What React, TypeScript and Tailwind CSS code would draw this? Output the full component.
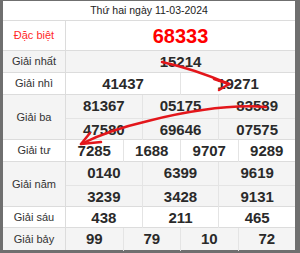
import React from 'react'

type Row = { label: string; lines: string[][]; h: number; grey?: boolean }

const rows: Row[] = [
  { label: 'Giải nhất', lines: [['15214']], h: 22, grey: true },
  { label: 'Giải nhì', lines: [['41437', '19271']], h: 22 },
  { label: 'Giải ba', lines: [['81367', '05175', '83589'], ['47580', '69646', '07575']], h: 45, grey: true },
  { label: 'Giải tư', lines: [['7285', '1688', '9707', '9289']], h: 22 },
  { label: 'Giải năm', lines: [['0140', '6399', '9619'], ['3239', '3428', '9131']], h: 45, grey: true },
  { label: 'Giải sáu', lines: [['438', '211', '465']], h: 21 },
  { label: 'Giải bảy', lines: [['99', '79', '10', '72']], h: 22, grey: true },
]

const font = { fontFamily: '"Liberation Sans", Arial, sans-serif' }

function Arrows() {
  return (
    <svg className="pointer-events-none absolute left-0 top-0" width="300" height="253" viewBox="0 0 300 253">
      <g fill="none" stroke="#e3161b" strokeWidth="2.5" strokeLinecap="round" strokeLinejoin="round">
        <path d="M162 62 C 185 67 208 75 229 84" />
        <polyline points="214,79 229,84 219,90" />
        <path d="M266 107 C 228 104 188 111 148 121 C 122 127 99 135 81 144" />
        <polyline points="90,133 81,144 101,142" />
      </g>
    </svg>
  )
}

export default function App() {
  return (
    <div className="relative h-[253px] w-[300px] overflow-hidden bg-[#6f6f6f] pb-[3px] pl-[3px] pr-[5px] pt-px" style={font}>
      <div className="flex h-[249px] w-[292px] flex-col bg-white">
        <div className="flex h-[20px] shrink-0 items-center justify-center border-b border-[#dcdcdc] text-[10.5px] text-[#222]">
          Thứ hai ngày 11-03-2024
        </div>
        <div className="flex h-[30px] shrink-0 border-b border-[#dcdcdc]">
          <div className="flex w-[63px] shrink-0 items-center justify-center border-r border-[#dcdcdc] text-[11px] text-[#ff2a2a]">
            Đặc biệt
          </div>
          <div className="flex flex-1 items-center justify-center text-[20px] font-bold text-[#ff0000]">68333</div>
        </div>
        {rows.map(r => (
          <div key={r.label} className={`flex shrink-0 border-b border-[#dcdcdc] last:border-b-0 ${r.grey ? 'bg-[#f4f4f4]' : 'bg-white'}`} style={{ height: r.h }}>
            <div className="flex w-[63px] shrink-0 items-center justify-center border-r border-[#dcdcdc] text-[11px] text-[#333]">
              {r.label}
            </div>
            <div className="flex flex-1 flex-col">
              {r.lines.map((line, i) => (
                <div key={i} className={`flex flex-1 ${i > 0 ? 'border-t border-[#e4e4e4]' : ''}`}>
                  {line.map((n, j) => (
                    <div key={j} className={`flex flex-1 items-center justify-center text-[15px] font-bold text-[#2a2a2a] ${j > 0 ? 'border-l border-[#e4e4e4]' : ''}`}>
                      {n}
                    </div>
                  ))}
                </div>
              ))}
            </div>
          </div>
        ))}
      </div>
      <Arrows />
    </div>
  )
}
